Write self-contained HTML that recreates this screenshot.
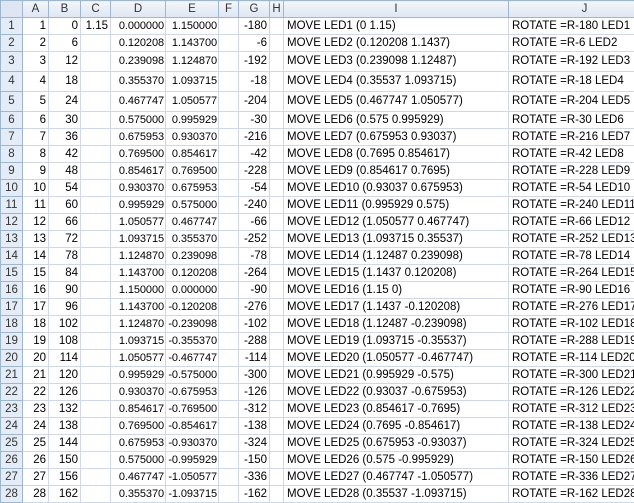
<!DOCTYPE html>
<html><head><style>
body{margin:0;width:634px;height:497px;overflow:hidden;background:#fff;font-family:"Liberation Sans",sans-serif;font-size:11.5px;color:#000}
table{border-collapse:collapse;table-layout:fixed;width:660px}
td{border:1px solid #d0d7e5;padding:0 2px;white-space:nowrap;overflow:hidden;height:16px;line-height:16px;text-align:right;box-sizing:content-box}
td.l{text-align:left;padding-left:3px}
td.n{font-size:11px;padding:0 1px;letter-spacing:-0.1px}
tr.h td{background:linear-gradient(#f3f6fb,#dde6f2);border-color:#9eb6ce;text-align:center;color:#333;height:16px}
td.r{background:#e4ecf7;border-color:#9eb6ce;text-align:center;color:#333;padding:0}
tr.t td{height:19px;line-height:19px;padding-top:0;vertical-align:bottom}
</style></head><body>
<table>
<colgroup><col style="width:22px"><col style="width:26px"><col style="width:32px"><col style="width:30px"><col style="width:55px"><col style="width:53px"><col style="width:20px"><col style="width:31px"><col style="width:14px"><col style="width:225px"><col style="width:152px"></colgroup>
<tr class="h"><td style="background:#dde6f2"></td><td>A</td><td>B</td><td>C</td><td>D</td><td>E</td><td>F</td><td>G</td><td>H</td><td>I</td><td>J</td></tr>
<tr><td class="r">1</td><td>1</td><td>0</td><td>1.15</td><td class="n">0.000000</td><td class="n">1.150000</td><td></td><td>-180</td><td></td><td class="l">MOVE LED1 (0 1.15)</td><td class="l">ROTATE =R-180 LED1</td></tr>
<tr><td class="r">2</td><td>2</td><td>6</td><td></td><td class="n">0.120208</td><td class="n">1.143700</td><td></td><td>-6</td><td></td><td class="l">MOVE LED2 (0.120208 1.1437)</td><td class="l">ROTATE =R-6 LED2</td></tr>
<tr class="t"><td class="r">3</td><td>3</td><td>12</td><td></td><td class="n">0.239098</td><td class="n">1.124870</td><td></td><td>-192</td><td></td><td class="l">MOVE LED3 (0.239098 1.12487)</td><td class="l">ROTATE =R-192 LED3</td></tr>
<tr class="t"><td class="r">4</td><td>4</td><td>18</td><td></td><td class="n">0.355370</td><td class="n">1.093715</td><td></td><td>-18</td><td></td><td class="l">MOVE LED4 (0.35537 1.093715)</td><td class="l">ROTATE =R-18 LED4</td></tr>
<tr class="t"><td class="r">5</td><td>5</td><td>24</td><td></td><td class="n">0.467747</td><td class="n">1.050577</td><td></td><td>-204</td><td></td><td class="l">MOVE LED5 (0.467747 1.050577)</td><td class="l">ROTATE =R-204 LED5</td></tr>
<tr><td class="r">6</td><td>6</td><td>30</td><td></td><td class="n">0.575000</td><td class="n">0.995929</td><td></td><td>-30</td><td></td><td class="l">MOVE LED6 (0.575 0.995929)</td><td class="l">ROTATE =R-30 LED6</td></tr>
<tr><td class="r">7</td><td>7</td><td>36</td><td></td><td class="n">0.675953</td><td class="n">0.930370</td><td></td><td>-216</td><td></td><td class="l">MOVE LED7 (0.675953 0.93037)</td><td class="l">ROTATE =R-216 LED7</td></tr>
<tr><td class="r">8</td><td>8</td><td>42</td><td></td><td class="n">0.769500</td><td class="n">0.854617</td><td></td><td>-42</td><td></td><td class="l">MOVE LED8 (0.7695 0.854617)</td><td class="l">ROTATE =R-42 LED8</td></tr>
<tr><td class="r">9</td><td>9</td><td>48</td><td></td><td class="n">0.854617</td><td class="n">0.769500</td><td></td><td>-228</td><td></td><td class="l">MOVE LED9 (0.854617 0.7695)</td><td class="l">ROTATE =R-228 LED9</td></tr>
<tr><td class="r">10</td><td>10</td><td>54</td><td></td><td class="n">0.930370</td><td class="n">0.675953</td><td></td><td>-54</td><td></td><td class="l">MOVE LED10 (0.93037 0.675953)</td><td class="l">ROTATE =R-54 LED10</td></tr>
<tr><td class="r">11</td><td>11</td><td>60</td><td></td><td class="n">0.995929</td><td class="n">0.575000</td><td></td><td>-240</td><td></td><td class="l">MOVE LED11 (0.995929 0.575)</td><td class="l">ROTATE =R-240 LED11</td></tr>
<tr><td class="r">12</td><td>12</td><td>66</td><td></td><td class="n">1.050577</td><td class="n">0.467747</td><td></td><td>-66</td><td></td><td class="l">MOVE LED12 (1.050577 0.467747)</td><td class="l">ROTATE =R-66 LED12</td></tr>
<tr><td class="r">13</td><td>13</td><td>72</td><td></td><td class="n">1.093715</td><td class="n">0.355370</td><td></td><td>-252</td><td></td><td class="l">MOVE LED13 (1.093715 0.35537)</td><td class="l">ROTATE =R-252 LED13</td></tr>
<tr><td class="r">14</td><td>14</td><td>78</td><td></td><td class="n">1.124870</td><td class="n">0.239098</td><td></td><td>-78</td><td></td><td class="l">MOVE LED14 (1.12487 0.239098)</td><td class="l">ROTATE =R-78 LED14</td></tr>
<tr><td class="r">15</td><td>15</td><td>84</td><td></td><td class="n">1.143700</td><td class="n">0.120208</td><td></td><td>-264</td><td></td><td class="l">MOVE LED15 (1.1437 0.120208)</td><td class="l">ROTATE =R-264 LED15</td></tr>
<tr><td class="r">16</td><td>16</td><td>90</td><td></td><td class="n">1.150000</td><td class="n">0.000000</td><td></td><td>-90</td><td></td><td class="l">MOVE LED16 (1.15 0)</td><td class="l">ROTATE =R-90 LED16</td></tr>
<tr><td class="r">17</td><td>17</td><td>96</td><td></td><td class="n">1.143700</td><td class="n">-0.120208</td><td></td><td>-276</td><td></td><td class="l">MOVE LED17 (1.1437 -0.120208)</td><td class="l">ROTATE =R-276 LED17</td></tr>
<tr><td class="r">18</td><td>18</td><td>102</td><td></td><td class="n">1.124870</td><td class="n">-0.239098</td><td></td><td>-102</td><td></td><td class="l">MOVE LED18 (1.12487 -0.239098)</td><td class="l">ROTATE =R-102 LED18</td></tr>
<tr><td class="r">19</td><td>19</td><td>108</td><td></td><td class="n">1.093715</td><td class="n">-0.355370</td><td></td><td>-288</td><td></td><td class="l">MOVE LED19 (1.093715 -0.35537)</td><td class="l">ROTATE =R-288 LED19</td></tr>
<tr><td class="r">20</td><td>20</td><td>114</td><td></td><td class="n">1.050577</td><td class="n">-0.467747</td><td></td><td>-114</td><td></td><td class="l">MOVE LED20 (1.050577 -0.467747)</td><td class="l">ROTATE =R-114 LED20</td></tr>
<tr><td class="r">21</td><td>21</td><td>120</td><td></td><td class="n">0.995929</td><td class="n">-0.575000</td><td></td><td>-300</td><td></td><td class="l">MOVE LED21 (0.995929 -0.575)</td><td class="l">ROTATE =R-300 LED21</td></tr>
<tr><td class="r">22</td><td>22</td><td>126</td><td></td><td class="n">0.930370</td><td class="n">-0.675953</td><td></td><td>-126</td><td></td><td class="l">MOVE LED22 (0.93037 -0.675953)</td><td class="l">ROTATE =R-126 LED22</td></tr>
<tr><td class="r">23</td><td>23</td><td>132</td><td></td><td class="n">0.854617</td><td class="n">-0.769500</td><td></td><td>-312</td><td></td><td class="l">MOVE LED23 (0.854617 -0.7695)</td><td class="l">ROTATE =R-312 LED23</td></tr>
<tr><td class="r">24</td><td>24</td><td>138</td><td></td><td class="n">0.769500</td><td class="n">-0.854617</td><td></td><td>-138</td><td></td><td class="l">MOVE LED24 (0.7695 -0.854617)</td><td class="l">ROTATE =R-138 LED24</td></tr>
<tr><td class="r">25</td><td>25</td><td>144</td><td></td><td class="n">0.675953</td><td class="n">-0.930370</td><td></td><td>-324</td><td></td><td class="l">MOVE LED25 (0.675953 -0.93037)</td><td class="l">ROTATE =R-324 LED25</td></tr>
<tr><td class="r">26</td><td>26</td><td>150</td><td></td><td class="n">0.575000</td><td class="n">-0.995929</td><td></td><td>-150</td><td></td><td class="l">MOVE LED26 (0.575 -0.995929)</td><td class="l">ROTATE =R-150 LED26</td></tr>
<tr><td class="r">27</td><td>27</td><td>156</td><td></td><td class="n">0.467747</td><td class="n">-1.050577</td><td></td><td>-336</td><td></td><td class="l">MOVE LED27 (0.467747 -1.050577)</td><td class="l">ROTATE =R-336 LED27</td></tr>
<tr><td class="r">28</td><td>28</td><td>162</td><td></td><td class="n">0.355370</td><td class="n">-1.093715</td><td></td><td>-162</td><td></td><td class="l">MOVE LED28 (0.35537 -1.093715)</td><td class="l">ROTATE =R-162 LED28</td></tr>
</table>
</body></html>
